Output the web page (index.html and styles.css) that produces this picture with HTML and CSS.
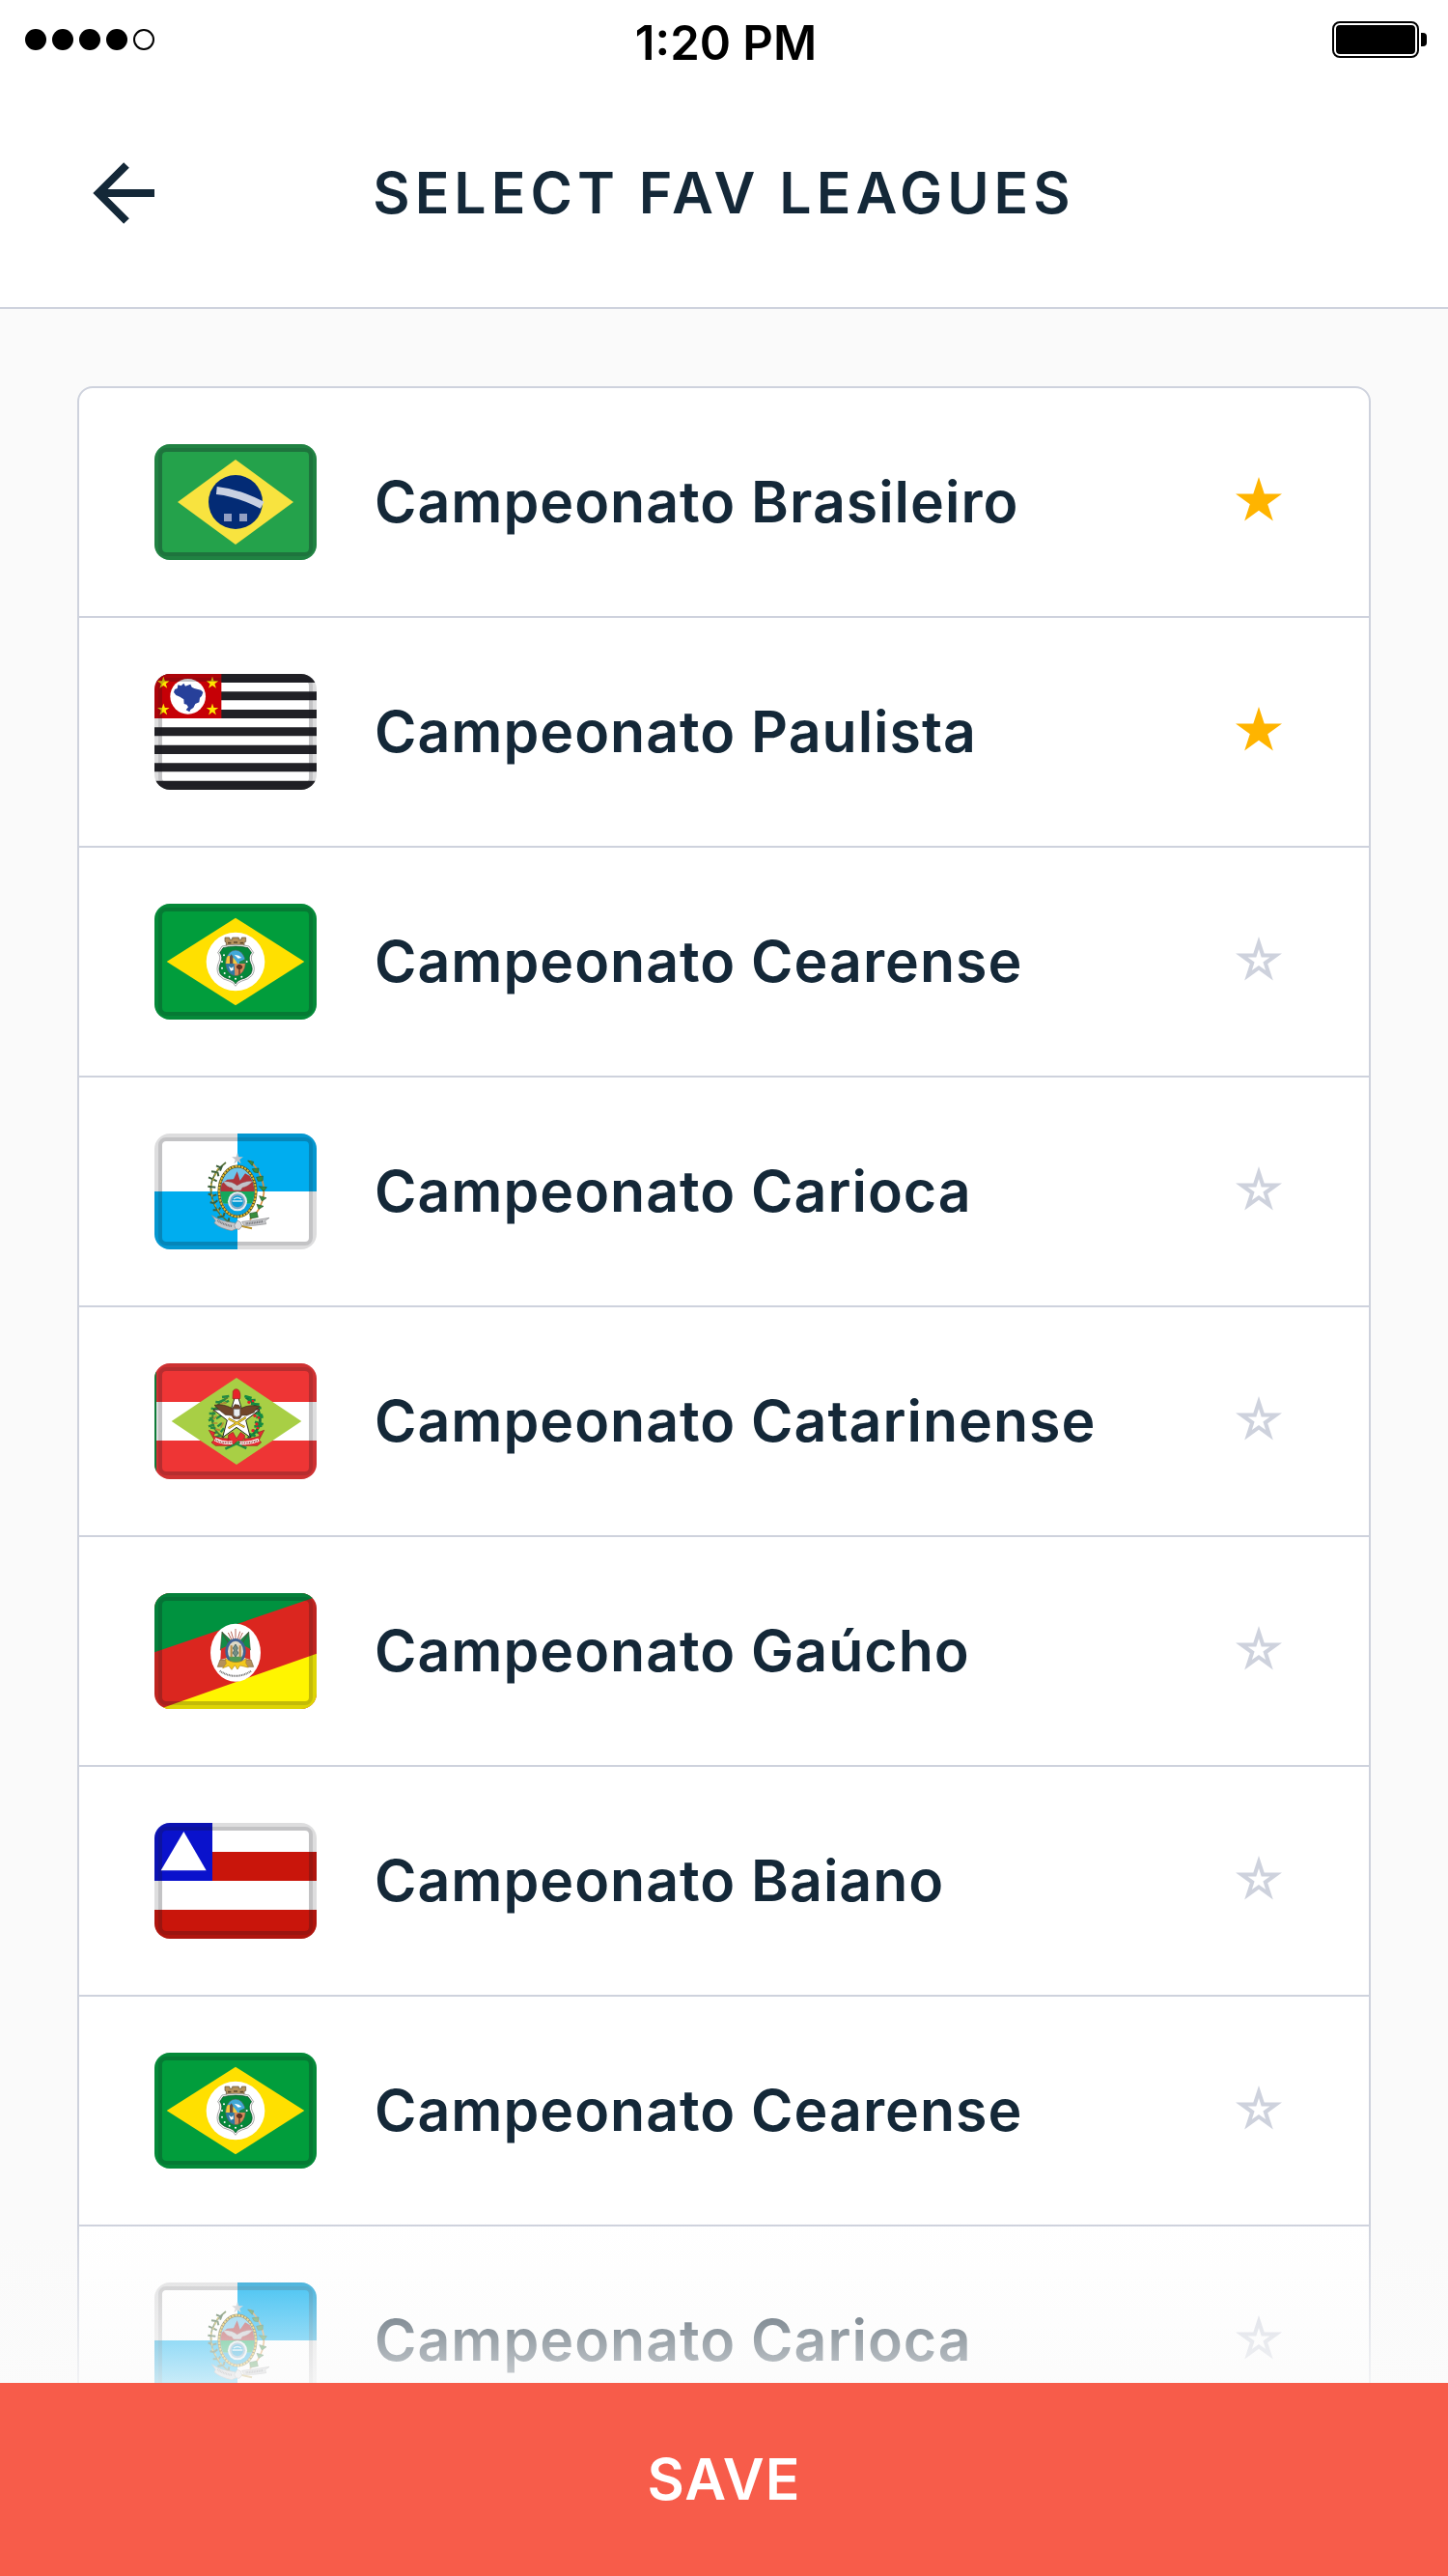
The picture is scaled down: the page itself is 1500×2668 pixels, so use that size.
FILE: index.html
```html
<!DOCTYPE html>
<html lang="en">
<head>
<meta charset="utf-8">
<meta name="viewport" content="width=device-width, initial-scale=1">
<title>Select Fav Leagues</title>
<link rel="stylesheet" href="styles.css">
</head>
<body>
<svg class="defs" width="0" height="0" aria-hidden="true">
  <defs>
    <symbol id="frame" viewBox="0 0 504 360">
      <rect x="12" y="12" width="480" height="336" rx="24" fill="none" stroke="#18181f" stroke-opacity=".15" stroke-width="24"/>
      <rect x="18" y="18" width="468" height="324" rx="18" fill="none" stroke="#18181f" stroke-opacity=".13" stroke-width="12"/>
    </symbol>

    <symbol id="star-on" viewBox="0 0 48 46">
      <path d="M24 0L29.7 17.4H48L33.2 28.2L38.8 45.6L24 34.8L9.2 45.6L14.8 28.2L0 17.4H18.3Z"/>
    </symbol>
    <symbol id="star-off" viewBox="0 0 48 46">
      <path fill-rule="evenodd" d="M24 0L29.7 17.4H48L33.2 28.2L38.8 45.6L24 34.8L9.2 45.6L14.8 28.2L0 17.4H18.3ZM24 13L21.3 21.4H12.5L19.6 26.6L16.9 35L24 29.9L31.1 35L28.4 26.6L35.5 21.4H26.7Z"/>
    </symbol>

    <symbol id="flag-brasil" viewBox="0 0 504 360">
      <path fill="#24a24b" d="M0 0H504V360H0Z"/>
      <path fill="#f8e33f" d="M72 180L252 48L432 180L252 312Z"/>
      <circle cx="252" cy="180" r="84" fill="#032b75"/>
      <path d="M193 144Q262 151 335 190" fill="none" stroke="#c9d1e2" stroke-width="24"/>
      <path fill="#929fc3" d="M216 216h24v24h-24zM264 216h24v24h-24z"/>
      <rect x="12" y="12" width="480" height="336" rx="24" fill="none" stroke="#18303a" stroke-opacity=".12" stroke-width="24"/>
      <use href="#frame" width="504" height="360"/>
    </symbol>

    <symbol id="flag-paulista" viewBox="60 54 504 360">
      <path fill="#fff" d="M60 54H564V414H60Z"/>
      <path fill="#212126" d="M60 54h504v27H60zM60 109h504v27H60zM60 165h504v27H60zM60 220h504v27H60zM60 275h504v28H60zM60 331h504v27H60zM60 386h504v28H60z"/>
      <path fill="#c60006" d="M60 54H268V192H60Z"/>
      <circle cx="164" cy="124" r="55" fill="#fff"/>
      <path fill="#27409a" d="M120 111L123 102L131 99L133 88L143 91L151 83L156 92L172 86L176 95L184 99L204 104L211 111L207 122L201 128L199 142L187 147L181 159L172 165L169 172L158 166L165 157L160 149L152 147L151 133L139 125L127 120Z"/>
      <g fill="#ffe600">
        <use href="#star-on" x="69" y="62" width="38" height="37"/>
        <use href="#star-on" x="221" y="62" width="38" height="37"/>
        <use href="#star-on" x="69" y="145" width="38" height="37"/>
        <use href="#star-on" x="221" y="145" width="38" height="37"/>
      </g>
      <use href="#frame" x="60" y="54" width="504" height="360"/>
    </symbol>

    <symbol id="flag-cearense" viewBox="60 48 504 360">
      <path fill="#019d3c" d="M60 48H564V408H60Z"/>
      <path fill="#ffe000" d="M98 228L312 92L526 228L312 364Z"/>
      <circle cx="312" cy="228" r="91" fill="#fff"/>
      <path fill="#b5925c" stroke="#5d4a2d" stroke-width="2" d="M279 153h14v6h9v-6h20v6h9v-6h13v13l-5 2v12q-28-7-56 0v-12l-4-2z"/>
      <path d="M288 170h10M306 168h12M326 170h10" stroke="#5d4a2d" stroke-width="5"/>
      <path fill="#fff" stroke="#777" stroke-width="2" d="M270 180Q312 170 354 180L368 200Q356 212 364 230Q376 250 364 270Q352 284 332 288Q318 292 312 304Q306 292 292 288Q272 284 260 270Q250 250 260 230Q268 212 257 200Z"/>
      <path fill="#04883a" stroke="#174a29" stroke-width="2" d="M273 185Q312 175 351 185L362 200Q350 212 358 231Q369 250 359 267Q348 279 330 283Q317 287 312 297Q307 287 294 283Q276 279 265 267Q256 250 266 231Q274 212 263 200Z"/>
      <clipPath id="ce-oval"><ellipse cx="312" cy="232" rx="31" ry="40"/></clipPath>
      <g clip-path="url(#ce-oval)">
        <path fill="#42a8d8" d="M280 190h64v44h-64z"/>
        <path fill="#f3c93e" d="M280 234V214Q300 200 318 234Z"/>
        <path fill="#2d7ba5" d="M280 234h32v40h-32z"/>
        <path fill="#d58b5b" d="M308 234h36v40h-34z"/>
        <path fill="#198548" d="M324 228l20-9v15h-20z"/>
        <path fill="#624b42" d="M294 234v-22l5-7 5 7v22z"/>
        <path fill="#fff" d="M308 206l14 3 9 7-11 2zM291 242l8 6 6-5v11l-8 3z"/>
        <path fill="#5b3325" d="M314 243q10-14 20 0-1 9-8 9v18h-4v-18q-7-1-8-9z"/>
      </g>
      <ellipse cx="312" cy="232" rx="31" ry="40" fill="none" stroke="#50614a" stroke-width="2"/>
      <g fill="#fff"><circle cx="276" cy="208" r="3"/><circle cx="270" cy="228" r="3"/><circle cx="270" cy="248" r="3"/><circle cx="278" cy="264" r="3"/><circle cx="293" cy="275" r="3"/><circle cx="312" cy="281" r="3"/><circle cx="331" cy="275" r="3"/><circle cx="347" cy="228" r="3"/></g>
      <use href="#frame" x="60" y="48" width="504" height="360"/>
    </symbol>

    <symbol id="flag-carioca" viewBox="60 42 504 360">
      <path fill="#fff" d="M60 42H564V402H60Z"/>
      <path fill="#00adef" d="M318 42H564V222H318ZM60 222H318V402H60Z"/>
      <path d="M282 132Q220 180 240 245Q254 300 306 325" fill="none" stroke="#56713b" stroke-width="5"/>
      <path d="M266 148l-14-6M270 142l-6 16M252 162l-15-2M256 162l3 13M242 184l-14-6M242 184l12 6M238 208l-12-2M238 208l12 1M238 234l-11-5M240 236l13-4M245 258l-12-2M246 258l10-8M256 280l-14 0M258 282l7-10M272 300l-16 2M274 300l4-12M290 316l-14 3M290 316l2-12" stroke="#3b5f3a" stroke-width="6"/>
      <path d="M258 150L236 200L240 250L268 296" fill="none" stroke="#c2a73a" stroke-width="4" stroke-dasharray="8 9"/>
      <path d="M356 126Q402 170 400 228Q394 280 356 310" fill="none" stroke="#d98f3c" stroke-width="5"/>
      <path fill="#388d3d" stroke="#2b5b2c" stroke-width="2" d="M350 126l18 4-4 12zM364 152l20-2-2 14-12-2zM377 178l20-4-1 15-14 1zM385 206l24 3-10 13zM386 236l22 6-14 10zM378 262l21 6-15 9zM356 290l22-4 4 16-24 4z"/>
      <ellipse cx="318" cy="222" rx="57" ry="78" fill="#6cc5ec" stroke="#4f4a1d" stroke-width="9"/>
      <clipPath id="rj-oval"><ellipse cx="318" cy="222" rx="52" ry="73"/></clipPath>
      <g clip-path="url(#rj-oval)">
        <path fill="#15a75d" d="M260 222h116v38H260z"/>
        <path fill="#05a2de" d="M260 260h116v44H260z"/>
        <path fill="#ad363b" d="M264 222V202L286 185L306 184L317 160L326 188L342 166L356 174L373 205V222Z"/>
      </g>
      <ellipse cx="318" cy="222" rx="57" ry="78" fill="none" stroke="#e6bd31" stroke-width="6" stroke-dasharray="7 3"/>
      <path fill="#c2c4c9" stroke="#85838a" stroke-width="1" d="M274 191Q302 190 317 204Q338 188 364 191Q350 208 333 210L328 218H306L300 210Q284 208 274 191Z"/>
      <circle cx="318" cy="253" r="30" fill="#e9edf0"/>
      <circle cx="318" cy="253" r="24" fill="#83aac4"/>
      <circle cx="318" cy="253" r="18" fill="#079cd5"/>
      <path fill="none" stroke="#d4ecf6" stroke-width="4" d="M302 252h32M306 246q12-9 24 0"/>
      <use href="#star-on" x="300" y="102" width="36" height="34" fill="#bfc2c7"/>
      <path d="M324 328L363 337M286 340L314 332" stroke="#b9932e" stroke-width="6"/>
      <path fill="#c7c8cb" stroke="#8a8a8d" stroke-width="2" d="M238 296Q262 314 310 320L314 338L300 344Q262 336 246 320L250 313ZM332 316Q372 312 417 304L404 313L407 323Q368 330 338 328Z"/>
      <path d="M256 312Q274 325 302 330M344 322Q370 320 398 315" fill="none" stroke="#77777b" stroke-width="7" stroke-dasharray="3 2"/>
      <path fill="#d9dadd" stroke="#85868a" stroke-width="2" d="M318 312l10 6 4 12-8 10-12-2-4-11z"/>
      <use href="#frame" x="60" y="42" width="504" height="360"/>
    </symbol>

    <symbol id="flag-catarinense" viewBox="60 36 504 360">
      <path fill="#ee3535" d="M60 36H564V396H60Z"/>
      <path fill="#fff" d="M60 156H564V276H60Z"/>
      <path fill="#0c8c3d" d="M60 36h6v360h-6z"/>
      <path fill="#a8cf45" d="M113 216L315 81L517 216L315 351Z"/>
      <path d="M288 142Q236 170 240 218Q246 250 276 268" fill="none" stroke="#547c2e" stroke-width="6"/>
      <path d="M292 138l-22 3M280 148l-22 10M270 158l-20-2M262 168l-14 16M254 180l-18-4M250 192l-20 0M246 206l-18 8M244 218l-12-14M246 226l-18 6M250 238l-16-2M256 250l-18 4M266 260l-16 6M258 184l18-12M252 208l16-10M256 232l14-10M266 250l10-12M276 160l15-8" stroke="#258a42" stroke-width="7"/>
      <path d="M284 158l-20 4M262 180l-18 4M254 200l-12 10M256 222l-14 0M264 244l-14-4M266 236l8-16" stroke="#b38c35" stroke-width="5"/>
      <path d="M344 142Q392 170 388 218Q384 250 350 268" fill="none" stroke="#17723a" stroke-width="8"/>
      <path d="M340 138l22 6M350 152l24-2M360 162l26 2M370 178l22-4M372 190l24 8M376 204l22-2M372 218l26 8M370 232l24-2M364 244l20 8M356 256l18 6" stroke="#128b41" stroke-width="8"/>
      <g fill="#e21f2a"><circle cx="354" cy="157" r="5"/><circle cx="366" cy="153" r="4"/><circle cx="381" cy="181" r="5"/><circle cx="372" cy="199" r="5"/><circle cx="384" cy="205" r="4"/><circle cx="378" cy="225" r="5"/><circle cx="381" cy="237" r="4"/><circle cx="366" cy="245" r="5"/></g>
      <path d="M280 302L334 276M346 300L296 276" stroke="#238b40" stroke-width="8"/>
      <path fill="#fff" stroke="#25251f" stroke-width="3" d="M315 124L332 180H387L344 213L358 266L315 235L272 266L286 213L243 180H298Z"/>
      <path fill="#e82329" stroke="#96201d" stroke-width="2" d="M303 146L304 124Q306 114 319 117Q329 124 326 146Z"/>
      <path fill="#70452a" stroke="#3b281a" stroke-width="2" d="M246 166Q272 160 302 176L310 164L322 166L329 176Q356 162 388 170Q372 178 370 188L347 198L332 197L325 208H306L300 198L280 196L265 184Z"/>
      <path fill="#e9ecef" stroke="#666" stroke-width="2" d="M306 178h20v20q-10 9-20 0z"/>
      <path d="M290 238L344 204M290 208L340 234" stroke="#796018" stroke-width="7"/>
      <path d="M290 238L344 204M290 208L340 234" stroke="#f1ce2c" stroke-width="4"/>
      <path fill="#e72a32" stroke="#93251f" stroke-width="2" d="M229 244L248 251L243 262Q270 272 292 270L302 282L298 292H250L237 282L246 274ZM401 244L381 251L388 262Q362 272 338 270L328 282L334 292H380L392 282L385 274ZM290 258L304 250L315 270L328 250L341 260L338 278L318 276L306 288L288 280Z"/>
      <path d="M248 272Q274 286 302 282M324 283Q354 286 384 274" stroke="#fff" stroke-width="10" fill="none"/>
      <path d="M250 274Q274 286 302 282M324 283Q354 286 382 275" stroke="#9d3634" stroke-width="5" stroke-dasharray="3 2" fill="none"/>
      <use href="#frame" x="60" y="36" width="504" height="360"/>
    </symbol>

    <symbol id="flag-gaucho" viewBox="60 45 504 360">
      <path fill="#db261f" d="M60 45H564V405H60Z"/>
      <path fill="#00923f" d="M60 45H564V56L60 229Z"/>
      <path fill="#fff500" d="M564 233V405H76Z"/>
      <ellipse cx="312" cy="230" rx="78" ry="90" fill="#fff"/>
      <path d="M312 156v42M289 168l15 30M334 168l-14 30M298 164l9 30M326 164l-9 30" stroke="#b96558" stroke-width="3"/>
      <path fill="#138b46" stroke="#3b5e35" stroke-width="2" d="M270 166L296 190L286 228L265 222ZM353 166L328 190L338 228L358 222Z"/>
      <path fill="#d62e2a" d="M267 218L292 206L288 246L265 252ZM357 218L334 206L338 246L358 252Z"/>
      <path d="M270 166L298 214M353 166L326 214" stroke="#544c38" stroke-width="3"/>
      <path fill="#b4915b" stroke="#7f603c" stroke-width="2" d="M264 252h20l6 12-12 10h-22zM360 252h-20l-6 12 12 10h22z"/>
      <ellipse cx="312" cy="226" rx="28" ry="36" fill="#dfd9c5" stroke="#3e6294" stroke-width="8"/>
      <path fill="#4e9856" d="M291 242h42q-5 20-21 22-17-3-21-22z"/>
      <path d="M299 208v36M326 208v36" stroke="#b98c46" stroke-width="6"/>
      <path fill="#738f83" stroke="#284b54" stroke-width="2" d="M312 204l7 12-3 7 5 8-9 12-9-12 5-8-4-7z"/>
      <path fill="#f3c81c" stroke="#b18a1e" stroke-width="2" d="M280 248Q298 260 312 260Q330 260 346 248L344 262L352 276L326 270L318 282L310 269L300 283L291 271L272 278L283 264Z"/>
      <path d="M263 287Q312 318 361 287" fill="none" stroke="#737373" stroke-width="6" stroke-dasharray="3 2"/>
      <use href="#frame" x="60" y="45" width="504" height="360"/>
    </symbol>

    <symbol id="flag-baiano" viewBox="60 39 504 360">
      <path fill="#fff" d="M60 39H564V399H60Z"/>
      <path fill="#c9150b" d="M60 129h504v90H60zM60 309h504v90H60z"/>
      <path fill="#0a12cc" d="M60 39h180v180H60z"/>
      <use href="#frame" x="60" y="39" width="504" height="360"/>
      <path fill="#fff" d="M151 66L221 187H80Z"/>
    </symbol>
  </defs>
</svg>

<div class="screen">
  <div class="status">
    <svg class="signal" viewBox="0 0 134 22" role="img" aria-label="Signal strength">
      <circle cx="11" cy="11" r="11"/><circle cx="39" cy="11" r="11"/><circle cx="67" cy="11" r="11"/><circle cx="95" cy="11" r="11"/>
      <circle cx="123" cy="11" r="10" fill="none" stroke="#000" stroke-width="2"/>
    </svg>
    <time class="clock">1:20 PM</time>
    <svg class="battery" viewBox="0 0 98 38" role="img" aria-label="Battery full">
      <rect x="1" y="1" width="88" height="36" rx="7" fill="none" stroke="#000" stroke-width="2"/>
      <rect x="4" y="4" width="82" height="30" rx="4"/>
      <path d="M92 12h2q4 0 4 4v6q0 4-4 4h-2z"/>
    </svg>
  </div>

  <header class="header">
    <button class="back" type="button" aria-label="Back">
      <svg viewBox="0 0 64 64" aria-hidden="true"><path d="M64 32H6M35 3L6 32L35 61" fill="none" stroke="currentColor" stroke-width="8"/></svg>
    </button>
    <h1 class="title">SELECT FAV LEAGUES</h1>
  </header>

  <main class="content">
    <ul class="leagues">
      <li><label class="league"><svg class="flag" aria-hidden="true"><use href="#flag-brasil"/></svg><span class="name">Campeonato Brasileiro</span><span class="fav"><input type="checkbox" checked><svg class="on"><use href="#star-on"/></svg><svg class="off"><use href="#star-off"/></svg></span></label></li>
      <li><label class="league"><svg class="flag" aria-hidden="true"><use href="#flag-paulista"/></svg><span class="name">Campeonato Paulista</span><span class="fav"><input type="checkbox" checked><svg class="on"><use href="#star-on"/></svg><svg class="off"><use href="#star-off"/></svg></span></label></li>
      <li><label class="league"><svg class="flag" aria-hidden="true"><use href="#flag-cearense"/></svg><span class="name">Campeonato Cearense</span><span class="fav"><input type="checkbox"><svg class="on"><use href="#star-on"/></svg><svg class="off"><use href="#star-off"/></svg></span></label></li>
      <li><label class="league"><svg class="flag" aria-hidden="true"><use href="#flag-carioca"/></svg><span class="name">Campeonato Carioca</span><span class="fav"><input type="checkbox"><svg class="on"><use href="#star-on"/></svg><svg class="off"><use href="#star-off"/></svg></span></label></li>
      <li><label class="league"><svg class="flag" aria-hidden="true"><use href="#flag-catarinense"/></svg><span class="name">Campeonato Catarinense</span><span class="fav"><input type="checkbox"><svg class="on"><use href="#star-on"/></svg><svg class="off"><use href="#star-off"/></svg></span></label></li>
      <li><label class="league"><svg class="flag" aria-hidden="true"><use href="#flag-gaucho"/></svg><span class="name">Campeonato Gaúcho</span><span class="fav"><input type="checkbox"><svg class="on"><use href="#star-on"/></svg><svg class="off"><use href="#star-off"/></svg></span></label></li>
      <li><label class="league"><svg class="flag" aria-hidden="true"><use href="#flag-baiano"/></svg><span class="name">Campeonato Baiano</span><span class="fav"><input type="checkbox"><svg class="on"><use href="#star-on"/></svg><svg class="off"><use href="#star-off"/></svg></span></label></li>
      <li><label class="league"><svg class="flag" aria-hidden="true"><use href="#flag-cearense"/></svg><span class="name">Campeonato Cearense</span><span class="fav"><input type="checkbox"><svg class="on"><use href="#star-on"/></svg><svg class="off"><use href="#star-off"/></svg></span></label></li>
      <li><label class="league"><svg class="flag" aria-hidden="true"><use href="#flag-carioca"/></svg><span class="name">Campeonato Carioca</span><span class="fav"><input type="checkbox"><svg class="on"><use href="#star-on"/></svg><svg class="off"><use href="#star-off"/></svg></span></label></li>
    </ul>
  </main>

  <footer class="footer">
    <button class="save" type="button">SAVE</button>
  </footer>
</div>
</body>
</html>
```
FILE: styles.css
```css
* {
  box-sizing: border-box;
}

body {
  margin: 0;
  background: #fafafa;
  color: #142838;
  font-family: Inter, "Liberation Sans", sans-serif;
}

button {
  border: 0;
  padding: 0;
  font: inherit;
  cursor: pointer;
}

.defs {
  position: absolute;
}

.screen {
  display: flex;
  flex-direction: column;
  height: 100vh;
}

/* Status bar */

.status {
  display: grid;
  grid-template-columns: 1fr auto 1fr;
  align-items: center;
  padding: 0 22px 0 26px;
  height: 82px;
  background: #fff;
  color: #000;
}

.signal {
  width: 134px;
  height: 22px;
}

.clock {
  padding-top: 8px;
  font-size: 49px;
  font-weight: 600;
  line-height: 56px;
}

.battery {
  justify-self: end;
  width: 98px;
  height: 38px;
}

/* Title bar */

.header {
  display: grid;
  grid-template-columns: 64px 1fr 64px;
  align-items: center;
  padding: 0 96px;
  height: 238px;
  background: #fff;
  border-bottom: 2px solid #ced2dd;
}

.back {
  width: 64px;
  height: 64px;
  background: none;
  color: inherit;
}

.back svg {
  display: block;
  overflow: visible;
}

.title {
  margin: 0;
  text-align: center;
  font-size: 59px;
  font-weight: 600;
  line-height: 72px;
  letter-spacing: 5px;
}

/* League list */

.content {
  flex: 1;
  min-height: 0;
  padding: 80px;
  overflow-y: auto;
  scrollbar-width: none;
}

.leagues {
  margin: 0;
  padding: 0;
  list-style: none;
  background: #fff;
  border: 2px solid #ced2dd;
  border-radius: 16px;
}

.leagues li + li {
  border-top: 2px solid #ced2dd;
}

.league {
  display: flex;
  align-items: center;
  gap: 60px;
  padding: 58px 90px 58px 78px;
  cursor: pointer;
}

.flag {
  flex: none;
  width: 168px;
  height: 120px;
  border-radius: 16px;
}

.name {
  flex: 1;
  font-size: 59px;
  font-weight: 600;
  line-height: 72px;
  letter-spacing: 1px;
}

.fav {
  position: relative;
  width: 48px;
  height: 52px;
}

.fav input {
  position: absolute;
  inset: 0;
  margin: 0;
  width: 100%;
  height: 100%;
  opacity: 0;
  cursor: pointer;
}

.fav svg {
  display: block;
  width: 48px;
  height: 46px;
}

.fav .on {
  display: none;
  fill: #ffb400;
}

.fav .off {
  fill: #ced2dd;
}

.fav input:checked ~ .on {
  display: block;
}

.fav input:checked ~ .off {
  display: none;
}

/* Save bar */

.footer {
  position: relative;
}

.footer::before {
  content: "";
  position: absolute;
  right: 0;
  bottom: 100%;
  left: 0;
  height: 168px;
  background: linear-gradient(rgba(251, 251, 251, 0), rgba(251, 251, 251, .8));
  pointer-events: none;
}

.save {
  display: block;
  width: 100%;
  height: 200px;
  background: #f75c4a;
  color: #fff;
  font-size: 59px;
  font-weight: 600;
  line-height: 72px;
  letter-spacing: 1px;
}
```
